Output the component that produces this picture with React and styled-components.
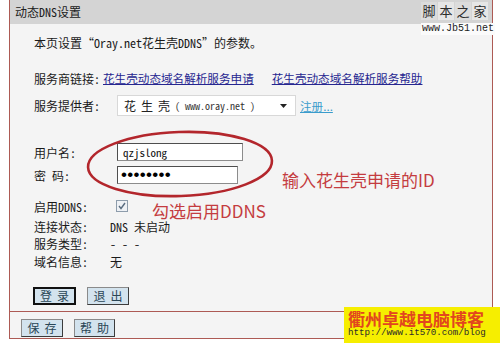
import styled, { createGlobalStyle } from "styled-components";

const FONT = `"Noto Sans Mono CJK SC", "Liberation Mono", "Noto Sans CJK SC", monospace`;
const CJK = `"Noto Sans CJK SC", "Liberation Sans", sans-serif`;
const LINE = "#ad5a54";

const GlobalStyle = createGlobalStyle`
  html, body { margin: 0; padding: 0; background: #fff; }
  body { font-family: ${FONT}; font-size: 12px; color: #1a1a1a; }
`;

const Page = styled.div`
  position: relative;
  width: 500px;
  height: 343px;
  overflow: hidden;
  background: #fff;
`;

const Panel = styled.div`
  margin-left: 9px;
  width: 484px;
  height: 339px;
  box-sizing: border-box;
  border: 1px solid ${LINE};
  border-top: none;
  background: #f4f4f4;
  display: flex;
  flex-direction: column;
`;

const Header = styled.div`
  height: 24px;
  flex-shrink: 0;
  background: #d4d4d4;
  padding-left: 5px;
  line-height: 24px;
  color: #202020;
`;

const Body = styled.div`
  height: 287px;
  flex-shrink: 0;
  padding-left: 24px;
  display: flex;
  flex-direction: column;
`;

const Row = styled.div`
  display: flex;
  align-items: center;
  height: ${(p) => p.$h || 16}px;
  margin-top: ${(p) => p.$mt || 0}px;
  margin-left: ${(p) => p.$ml || 0}px;
  gap: ${(p) => p.$gap || 0}px;
  flex-shrink: 0;
  white-space: nowrap;
`;

const Label = styled.span`
  width: ${(p) => p.$w || 83}px;
  flex-shrink: 0;
`;

const Link = styled.a`
  font-family: ${CJK};
  font-size: 11.6px;
  color: #262690;
  text-decoration: underline;
  margin-right: 18px;
  cursor: pointer;
`;

const Select = styled.div`
  width: 179px;
  height: 21px;
  box-sizing: border-box;
  background: #fff;
  border: 1px solid #d8d8d8;
  display: flex;
  align-items: center;
  padding-left: 6px;
`;

const SelectCn = styled.span`
  font-family: ${CJK};
  font-size: 12px;
  letter-spacing: 5px;
  color: #222;
`;

const SelectEn = styled.span`
  font-size: 10px;
  color: #333;
`;

const Caret = styled.svg`
  margin-left: auto;
  margin-right: 8px;
`;

const Register = styled.a`
  font-family: ${CJK};
  font-size: 11.6px;
  color: #3a9ccc;
  text-decoration: underline;
  margin-left: 4px;
`;

const Field = styled.input`
  width: ${(p) => p.$w}px;
  height: 18px;
  box-sizing: border-box;
  margin: 0;
  padding: 0 0 0 5px;
  border: 1px solid #8c8c8c;
  border-top-color: #4e4e4e;
  border-left-color: #4e4e4e;
  background: #fff;
  font-family: ${FONT};
  font-size: 11px;
  color: #111;
  outline: none;
  &[type="password"] {
    font-family: "Liberation Sans", sans-serif;
    font-size: 17px;
    letter-spacing: 0.3px;
    padding-left: 3px;
    color: #000;
  }
`;

const Check = styled.span`
  width: 12px;
  height: 12px;
  box-sizing: border-box;
  margin-left: 6px;
  border: 1px solid #8d9cab;
  background: #eef1f5;
  display: flex;
  align-items: center;
  justify-content: center;
`;

const Btn = styled.button`
  width: ${(p) => p.$w}px;
  height: 18px;
  box-sizing: border-box;
  margin: 0;
  padding: 0;
  white-space: nowrap;
  overflow: hidden;
  background: #d3e3ee;
  border: 1px solid #3c3c3c;
  border-top-color: #8a8a8a;
  border-left-color: #8a8a8a;
  ${(p) => p.$focus && "border: 2px solid #111;"}
  font-family: ${CJK};
  font-size: 12px;
  line-height: 14px;
  letter-spacing: 5px;
  text-indent: 5px;
  color: #2a4656;
`;

const Footer = styled.div`
  flex: 1;
  border-top: 1px solid ${LINE};
  display: flex;
  align-items: flex-start;
  gap: 11px;
  padding: 7px 0 0 11px;
`;

const Ring = styled.svg`
  position: absolute;
  left: 83px;
  top: 127px;
`;

const Note = styled.div`
  position: absolute;
  left: ${(p) => p.$x}px;
  top: ${(p) => p.$y}px;
  font-family: ${CJK};
  font-size: 17px;
  line-height: 16px;
  color: #c43c40;
  white-space: nowrap;
`;

const SiteMark = styled.div`
  position: absolute;
  left: 421px;
  top: 2px;
  display: flex;
  flex-direction: column;
  align-items: flex-start;
`;

const MarkChars = styled.div`
  display: flex;
  gap: 1px;
`;

const MarkChar = styled.span`
  width: 16px;
  height: 18px;
  background: ${(p) => (p.$alt ? "#e6e6e6" : "#dcdcdc")};
  font-family: ${CJK};
  font-size: 13px;
  line-height: 18px;
  text-align: center;
  color: #2c2c2c;
`;

const MarkUrl = styled.span`
  margin-top: 3px;
  background: #fbfbfb;
  padding: 0 1px;
  font-family: "Liberation Mono", monospace;
  font-size: 10px;
  line-height: 12px;
  color: #222;
`;

const Stamp = styled.div`
  position: absolute;
  left: 344px;
  top: 307px;
  width: 156px;
  height: 36px;
  box-sizing: border-box;
  padding: 3px 0 0 4px;
  background: #f6ee00;
  display: flex;
  flex-direction: column;
  gap: 1px;
`;

const StampTitle = styled.span`
  font-family: ${CJK};
  font-size: 17px;
  line-height: 17px;
  font-weight: 700;
  color: #e2461e;
  white-space: nowrap;
`;

const StampUrl = styled.span`
  font-family: "Liberation Mono", monospace;
  font-size: 9.2px;
  line-height: 10px;
  color: #2a2a2a;
  white-space: nowrap;
`;

export default function App() {
  return (
    <Page>
      <GlobalStyle />
      <Panel>
        <Header>动态DNS设置</Header>
        <Body>
          <Row $mt={10}>本页设置“Oray.net花生壳DDNS”的参数。</Row>
          <Row $mt={20}>
            <Label $w={69}>服务商链接:</Label>
            <Link>花生壳动态域名解析服务申请</Link>
            <Link>花生壳动态域名解析服务帮助</Link>
          </Row>
          <Row $mt={9} $h={21}>
            <Label>服务提供者:</Label>
            <Select>
              <SelectCn>花生壳</SelectCn>
              <SelectEn>( www.oray.net )</SelectEn>
              <Caret width="7" height="4" viewBox="0 0 7 4">
                <path d="M0 0h7L3.5 4z" fill="#222" />
              </Caret>
            </Select>
            <Register>注册...</Register>
          </Row>
          <Row $mt={27} $h={18}>
            <Label>用户名:</Label>
            <Field $w={126} type="text" value="qzjslong" readOnly />
          </Row>
          <Row $mt={5} $h={18}>
            <Label>密 码:</Label>
            <Field $w={121} type="password" value="12345678" readOnly />
          </Row>
          <Row $mt={14}>
            <Label $w={76}>启用DDNS:</Label>
            <Check>
              <svg width="8" height="8" viewBox="0 0 8 8">
                <path d="M1 4l2 2.5L7 1" fill="none" stroke="#5a6d80" strokeWidth="1.4" />
              </svg>
            </Check>
          </Row>
          <Row $mt={4}>
            <Label $w={76}>连接状态:</Label>
            <span>DNS 未启动</span>
          </Row>
          <Row $mt={1}>
            <Label $w={76}>服务类型:</Label>
            <span>- - -</span>
          </Row>
          <Row $mt={2}>
            <Label $w={76}>域名信息:</Label>
            <span>无</span>
          </Row>
          <Row $mt={18} $h={18} $ml={-1} $gap={11}>
            <Btn $w={43} $focus>登录</Btn>
            <Btn $w={42}>退出</Btn>
          </Row>
        </Body>
        <Footer>
          <Btn $w={42}>保存</Btn>
          <Btn $w={41}>帮助</Btn>
        </Footer>
      </Panel>

      <Ring width="194" height="74" viewBox="0 0 194 74">
        <ellipse
          cx="97"
          cy="37"
          rx="92"
          ry="32"
          fill="none"
          stroke="#b3262c"
          strokeWidth="2.6"
          transform="rotate(-2 97 37)"
        />
      </Ring>
      <Note $x={282} $y={172}>输入花生壳申请的ID</Note>
      <Note $x={152} $y={203}>勾选启用DDNS</Note>

      <SiteMark>
        <MarkChars>
          <MarkChar>脚</MarkChar>
          <MarkChar $alt>本</MarkChar>
          <MarkChar>之</MarkChar>
          <MarkChar $alt>家</MarkChar>
        </MarkChars>
        <MarkUrl>www.Jb51.net</MarkUrl>
      </SiteMark>

      <Stamp>
        <StampTitle>衢州卓越电脑博客</StampTitle>
        <StampUrl>http://www.it570.com/blog</StampUrl>
      </Stamp>
    </Page>
  );
}
